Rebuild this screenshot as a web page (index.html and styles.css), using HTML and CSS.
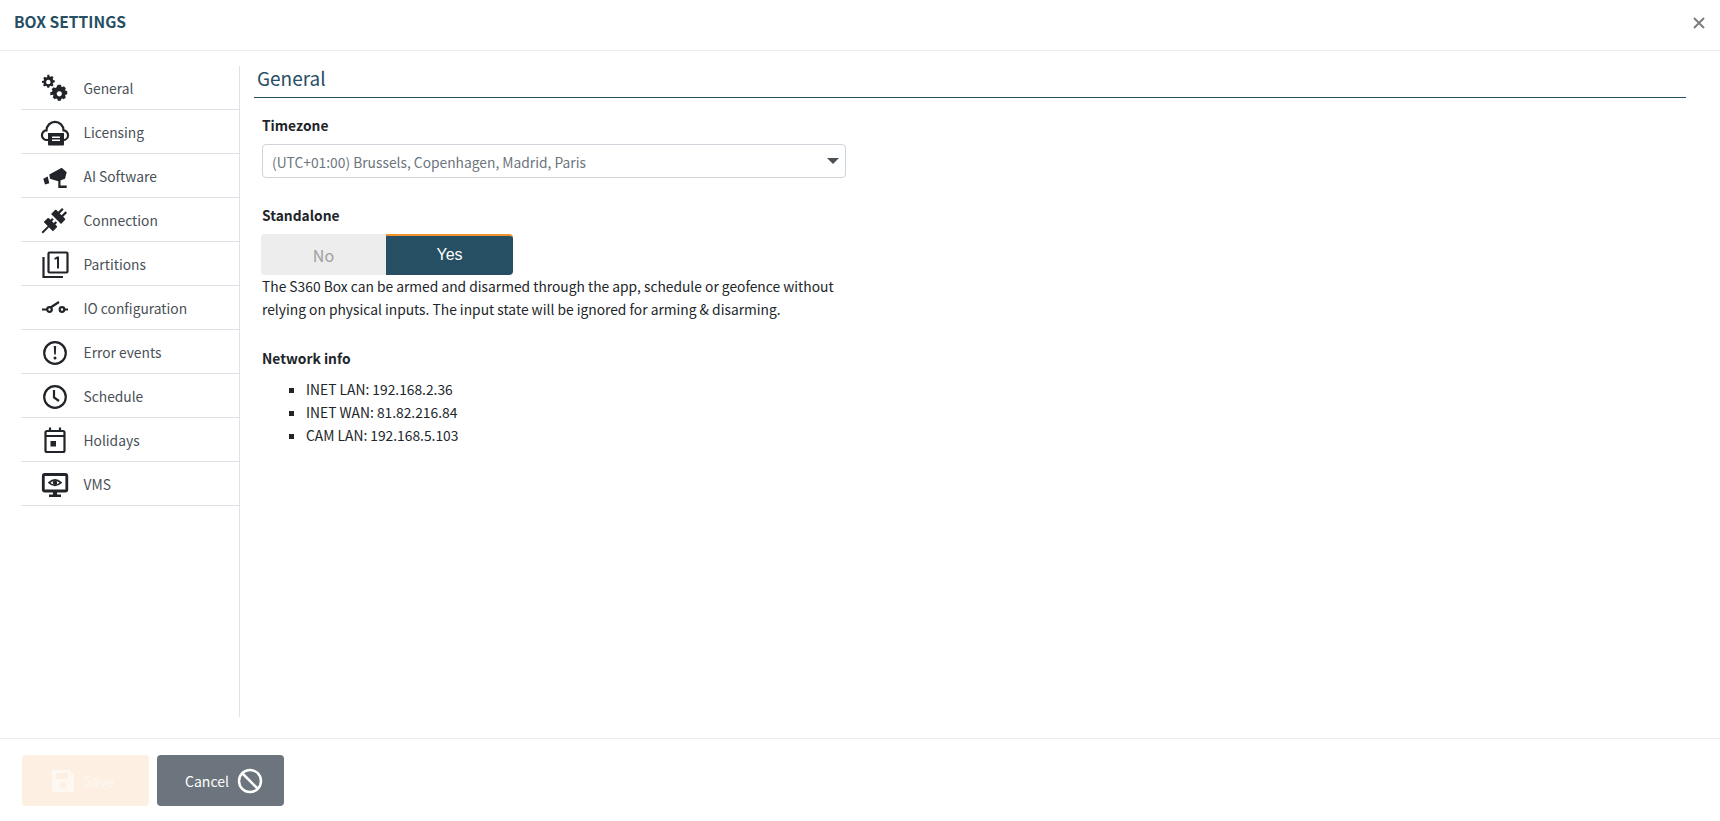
FILE: index.html
```html
<!DOCTYPE html>
<html lang="en">
<head>
<meta charset="utf-8">
<title>Box settings</title>
<link rel="stylesheet" href="styles.css">
</head>
<body>
<div class="dialog">
  <header class="head">
    <h1 class="title">BOX SETTINGS</h1>
    <svg class="close" viewBox="0 0 12 12"><path d="M1 1l10 10M11 1L1 11"/></svg>
  </header>
  <div class="body">
    <nav class="side">
      <a class="item"><span class="ico"><svg viewBox="0 0 30 30"><path fill-rule="evenodd" d="M8 1h2l.5 1.800 1.200.5 1.600-.9 1.500 1.500-.9 1.600.5 1.200 1.800.5v2l-1.800.5-.5 1.200.9 1.600-1.500 1.500-1.600-.9-1.200.5-.5 1.800H8l-.5-1.800-1.200-.5-1.600.9-1.500-1.500.9-1.600-.5-1.200L2 10V8l1.800-.5.5-1.200-.9-1.600 1.500-1.500 1.600.9 1.200-.5zm1 5.500a2.500 2.500 0 1 0 .01 0z" transform="translate(.2 .9) scale(.9)"/><path fill-rule="evenodd" d="M18 6h4l.6 2.200 1.500.7 2-1.100 2.700 2.700-1.100 2 .7 1.500 2.200.6v4l-2.200.6-.7 1.500 1.100 2-2.700 2.700-2-1.100-1.500.7-.6 2.200h-4l-.6-2.200-1.500-.7-2 1.100-2.700-2.700 1.100-2-.7-1.500L8 20v-4l2.200-.6.7-1.500-1.100-2 2.700-2.700 2 1.100 1.500-.7zm2 8.500a3.500 3.500 0 1 0 .01 0z" transform="translate(4.300 7.300) scale(.75)"/></svg></span>General</a>
      <a class="item"><span class="ico"><svg viewBox="0 0 30 30"><path class="ln" d="M8 23H7a4.800 4.800 0 0 1-.5-9.600 8.500 8.500 0 0 1 17 0 4.800 4.800 0 0 1-.5 9.600H22"/><path fill-rule="evenodd" d="M8 16h16v11.500a1 1 0 0 1-1 1H9a1 1 0 0 1-1-1zm4 3.500V21h8v-1.500zm0 3V24h8v-1.500z"/></svg></span>Licensing</a>
      <a class="item"><span class="ico"><svg viewBox="0 0 30 30"><path d="M21.700 6.800L26.700 11.200 25 17.800 18.300 20.200 10 17.800 9.300 13.500zM3.300 17.800L7.700 15.500 9.300 22.200 5 23.500z"/><path d="M18.300 19h2.200v5.500h6.200V27h-8.400z"/></svg></span>AI Software</a>
      <a class="item"><span class="ico"><svg viewBox="0 0 30 30"><g transform="rotate(-45 15 15)"><path d="M-3 14h9v2h-9zM5.500 8.500h5.500a1 1 0 0 1 1 1v2h2.500v2.200H12v2.600h2.500v2.200H12v2a1 1 0 0 1-1 1H5.500z"/><path d="M16.500 8h5.500a1 1 0 0 1 1 1v2.500h5.500v2.200H23v2.600h5.500v2.200H23V21a1 1 0 0 1-1 1h-5.500z"/></g></svg></span>Connection</a>
      <a class="item"><span class="ico"><svg viewBox="0 0 30 30"><path class="ln" d="M3.500 8v20h19.500"/><rect class="ln" x="8.500" y="3.500" width="19" height="20" rx="1"/><path d="M17 7.500h2v12h-2V10l-2.500.8V9z"/></svg></span>Partitions</a>
      <a class="item"><span class="ico"><svg viewBox="0 0 30 30"><circle class="ln" cx="9.500" cy="16.500" r="2.300"/><circle class="ln" cx="22" cy="16.500" r="2.300"/><path class="ln" d="M2 16.500h5M24.500 16.500h3.500M10.500 14.500L19 9"/></svg></span>IO configuration</a>
      <a class="item"><span class="ico"><svg viewBox="0 0 30 30"><circle class="ln" cx="15" cy="16" r="10.800"/><path d="M13.800 9h2.400l-.4 8.500h-1.600z"/><circle cx="15" cy="21" r="1.500"/></svg></span>Error events</a>
      <a class="item"><span class="ico"><svg viewBox="0 0 30 30"><circle class="ln" cx="15" cy="16" r="10.800"/><path class="ln" d="M14 9v7.500l5 3.500"/></svg></span>Schedule</a>
      <a class="item"><span class="ico"><svg viewBox="0 0 30 30"><rect class="ln" x="5.500" y="6" width="19" height="21" rx="1.500"/><path class="ln" d="M5.500 11h19M10 2.500v4M20 2.500v4"/><rect x="10.500" y="16" width="5.500" height="5.500"/></svg></span>Holidays</a>
      <a class="item"><span class="ico"><svg viewBox="0 0 30 30"><rect class="mon" x="3.300" y="5.500" width="23.500" height="16.500" rx="1.500"/><path d="M13 22h4v3.500h4v2.500H9v-2.500h4z"/><path class="thin" d="M9 13.700q6-5.500 12 0q-6 5.500-12 0z"/><circle cx="15" cy="13.700" r="2.200"/></svg></span>VMS</a>
    </nav>
    <main class="main">
      <h2 class="heading">General</h2>
      <div class="fields">
        <label class="lbl">Timezone</label>
        <div class="select">(UTC+01:00) Brussels, Copenhagen, Madrid, Paris<span class="caret"></span></div>
        <label class="lbl lbl-standalone">Standalone</label>
        <div class="toggle">
          <span class="opt">No</span>
          <span class="opt on">Yes</span>
        </div>
        <p class="note">The S360 Box can be armed and disarmed through the app, schedule or geofence without relying on physical inputs. The input state will be ignored for arming &amp; disarming.</p>
        <label class="lbl lbl-net">Network info</label>
        <ul class="net">
          <li>INET LAN: 192.168.2.36</li>
          <li>INET WAN: 81.82.216.84</li>
          <li>CAM LAN: 192.168.5.103</li>
        </ul>
      </div>
    </main>
  </div>
  <footer class="foot">
    <button class="btn save"><svg class="bi" viewBox="0 0 22 22"><path fill-rule="evenodd" d="M2 0h15l5 5v15a2 2 0 0 1-2 2H2a2 2 0 0 1-2-2V2a2 2 0 0 1 2-2zm2 3v6h12V3zm7 9a3.500 3.500 0 1 0 .01 0z"/></svg>Save</button>
    <button class="btn cancel">Cancel<svg class="bi2" viewBox="0 0 26 26"><circle cx="13" cy="13" r="11"/><path d="M5.500 5.500l15 15"/></svg></button>
  </footer>
</div>
</body>
</html>
```
FILE: styles.css
```css
* { box-sizing: border-box; }
html, body { margin: 0; height: 100%; }
body {
  font-family: "Noto Sans CJK SC", "Noto Sans", sans-serif;
  font-size: 13.800px;
  line-height: 22px;
  color: #212529;
  background: #fff;
}
.dialog { display: flex; flex-direction: column; height: 821px; overflow: hidden; }
.head {
  height: 51px;
  flex: none;
  display: flex;
  align-items: center;
  justify-content: space-between;
  padding: 0 15px 9px 14px;
  border-bottom: 1px solid #e9ecef;
}
.title { margin: 0; font-size: 15.600px; font-weight: 700; color: #264f63; line-height: 22px; }
.close { width: 12px; height: 12px; margin-top: 5px; fill: none; stroke: #7d7d7d; stroke-width: 2; }
.body { flex: 1; display: flex; padding: 15px 0 21px 21px; min-height: 0; }
.side { width: 219px; flex: none; border-right: 1px solid #dee2e6; }
.item {
  display: flex;
  align-items: center;
  height: 44px;
  border-bottom: 1px solid #dee2e6;
  color: #495057;
}
.ico { width: 30px; height: 30px; margin: 0 13.500px 0 19px; display: block; flex: none; }
.ico svg { display: block; width: 30px; height: 30px; fill: #212529; }
.ln { fill: none; stroke: #212529; stroke-width: 2.200; }
.mon { fill: none; stroke: #212529; stroke-width: 2.800; }
.thin { fill: none; stroke: #212529; stroke-width: 1.600; }
.main { flex: 1; padding: 0 34px 0 14px; min-width: 0; }
.heading {
  margin: 0;
  height: 32px;
  font-size: 19px;
  font-weight: 400;
  line-height: 24px;
  color: #264f63;
  border-bottom: 1px solid #264f63;
  padding-left: 3px;
}
.fields { width: 593px; padding: 16px 0 0 8px; }
.lbl { display: block; font-weight: 700; line-height: 22px; color: #212529; }
.select {
  position: relative;
  width: 584px;
  height: 34px;
  margin-top: 8px;
  padding: 0 30px 0 9px;
  border: 1px solid #ced4da;
  border-radius: 4px;
  color: #6c757d;
  line-height: 35px;
}
.caret {
  position: absolute;
  right: 6px;
  top: 13px;
  border: 6px solid transparent;
  border-top: 6px solid #495057;
  border-bottom: 0;
}
.lbl-standalone { margin-top: 26px; }
.toggle { display: flex; width: 252px; height: 41px; margin-top: 8px; margin-left: -1px; }
.opt {
  flex: none;
  width: 125px;
  display: flex;
  align-items: center;
  justify-content: center;
  background: #ededed;
  color: #a0a0a0;
  font-size: 16px;
  border-radius: 4px 0 0 4px;
}
.opt.on {
  width: 127px;
  padding-bottom: 2px;
  background: #264f63;
  color: #fff;
  font-family: "Liberation Sans", sans-serif;
  border-top: 2px solid #f0922e;
  border-radius: 0 4px 4px 0;
}
.note { margin: 0; width: 585px; line-height: 23px; color: #212529; }
.lbl-net { margin-top: 26px; }
.net { list-style: square; margin: 9px 0 0; padding: 0 0 0 44px; line-height: 23px; }
.foot {
  height: 83px;
  flex: none;
  border-top: 1px solid #e9ecef;
  padding: 16px 0 0 22px;
  display: flex;
  gap: 8px;
  align-items: flex-start;
}
.btn {
  width: 127px;
  height: 51px;
  border: 0;
  border-radius: 4px;
  font: inherit;
  font-size: 14px;
  color: #fff;
  display: flex;
  align-items: center;
  justify-content: center;
  padding: 0;
}
.save { background: #fdefe1; color: #fef8f2; gap: 9px; padding-right: 4px; }
.cancel { background: #6c757d; gap: 8px; padding-left: 7px; }
.bi { width: 22px; height: 22px; fill: #fef8f2; }
.bi2 { width: 26px; height: 26px; fill: none; stroke: #fff; stroke-width: 2.500; }
```
